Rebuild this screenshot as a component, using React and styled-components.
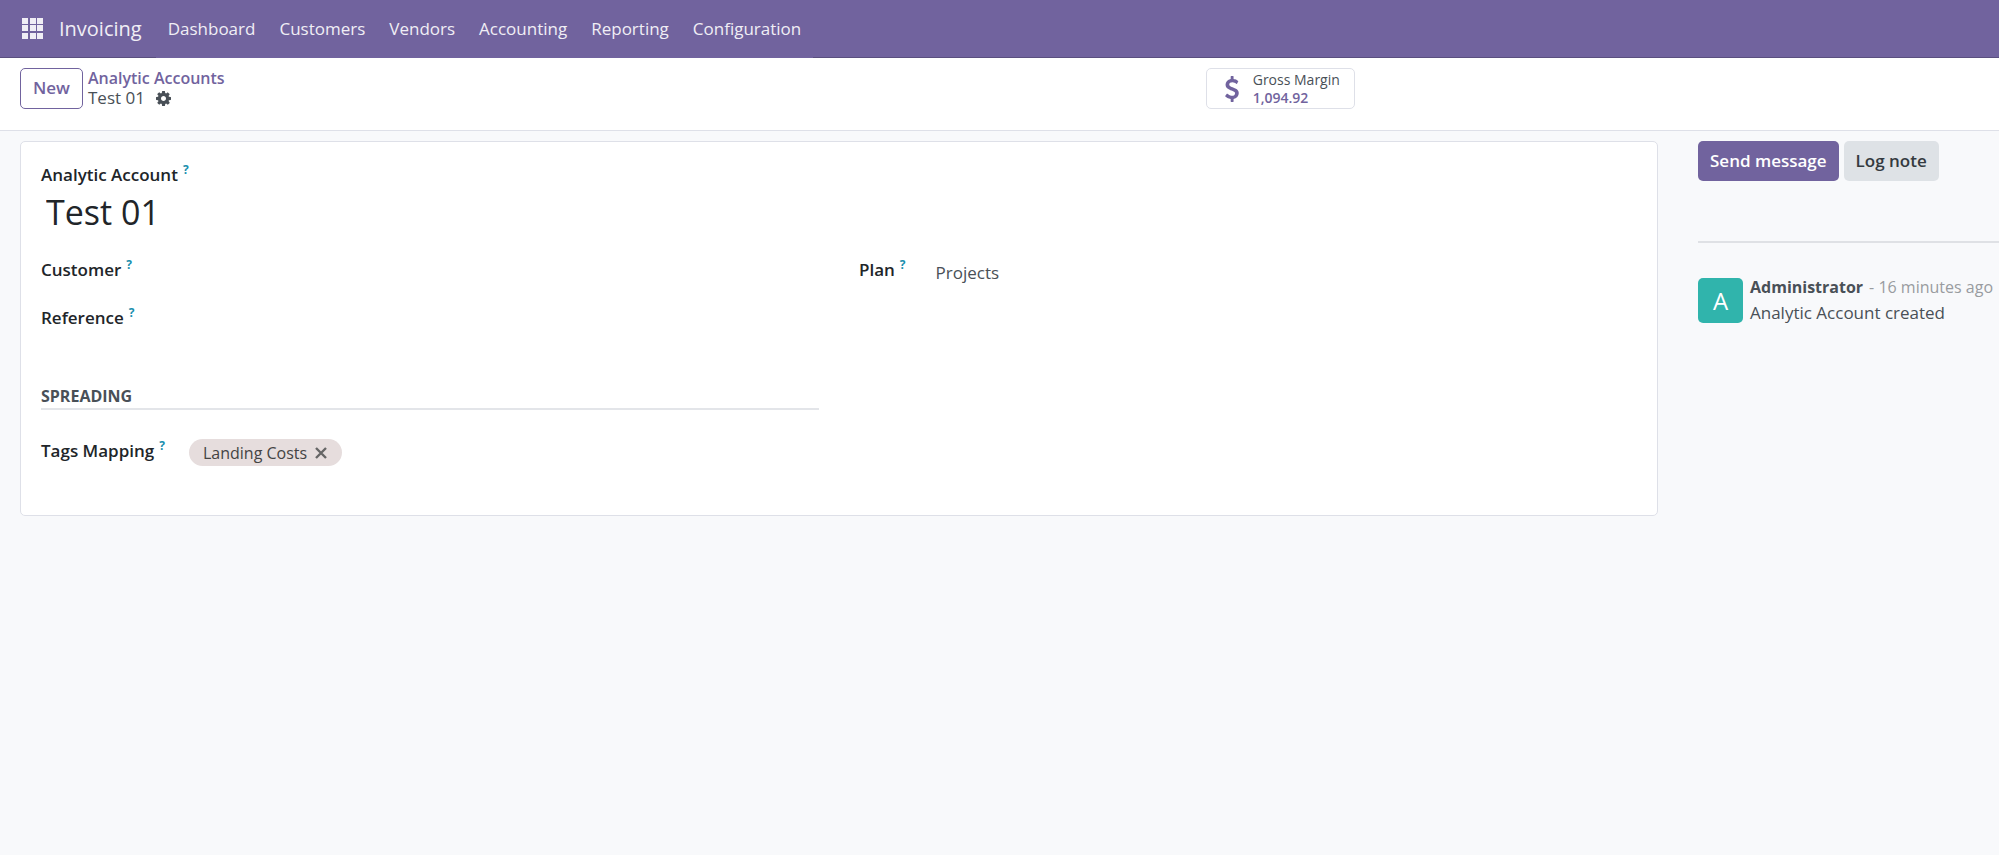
import { useState } from "react"
import styled, { createGlobalStyle } from "styled-components"

const menus = ["Dashboard", "Customers", "Vendors", "Accounting", "Reporting", "Configuration"]

function AppsIcon() {
  const cells = [0, 7, 15]
  return (
    <svg width="22" height="21" viewBox="0 0 22 21" fill="currentColor" aria-hidden="true">
      {cells.map((y) => cells.map((x) => (
        <rect key={`${x}-${y}`} x={x === 7 ? 8 : x} y={y} width="6" height="6" />
      )))}
    </svg>
  )
}

function CogIcon() {
  return (
    <svg width="15" height="15" viewBox="128 128 1536 1536" fill="currentColor" aria-hidden="true">
      <path d="M1152 896q0-106-75-181t-181-75-181 75-75 181 75 181 181 75 181-75 75-181zm512-109v222q0 12-8 23t-20 13l-185 28q-19 54-39 91 35 50 107 138 10 12 10 25t-9 23q-27 37-99 108t-94 71q-12 0-26-9l-138-108q-44 23-91 38-16 136-29 186-7 28-36 28h-222q-14 0-24.500-8.500t-11.500-21.500l-28-184q-49-16-90-37l-141 107q-10 9-25 9-14 0-25-11-126-114-165-168-7-10-7-23 0-12 8-23 15-21 51-66.500t54-70.500q-27-50-41-99l-183-27q-13-2-21-12.500t-8-23.500v-222q0-12 8-23t19-13l186-28q14-46 39-92-40-57-107-138-10-12-10-24 0-10 9-23 26-36 98.500-107.500t94.500-71.500q13 0 26 10l138 107q44-23 91-38 16-136 29-186 7-28 36-28h222q14 0 24.500 8.500t11.500 21.500l28 184q49 16 90 37l142-107q9-9 24-9 13 0 25 10 129 119 165 170 7 8 7 22 0 12-8 23-15 21-51 66.500t-54 70.500q26 50 41 98l183 28q13 2 21 12.500t8 23.500z" />
    </svg>
  )
}

function DollarIcon() {
  return (
    <svg width="26" height="26" viewBox="0 0 1792 1792" fill="currentColor" aria-hidden="true">
      <path d="M1362 1185q0 153-99.500 263.500t-258.500 136.500v175q0 14-9 23t-23 9h-135q-13 0-22.500-9.500t-9.500-22.500v-175q-66-9-127.500-31t-101.500-44.500-74-48-46.500-37.500-17.500-18q-17-21-2-41l103-135q7-10 23-12 15-2 24 9l2 2q113 99 243 125 37 8 74 8 81 0 142.500-43t61.500-122q0-28-15-53t-33.500-42-58.500-37.500-66-32-80-32.500q-39-16-61.500-25t-61.500-26.500-62.500-31-56.500-35.500-53.500-42.500-43.500-49-35.500-58-21-66.500-8.500-78q0-138 98-242t255-134v-180q0-13 9.500-22.500t22.500-9.500h135q14 0 23 9t9 23v176q57 6 110.500 23t87 33.500 63.500 37.500 39 29 15 14q17 18 5 38l-81 146q-8 15-23 16-14 3-27-7-3-3-14.500-12t-39-26.500-58.500-32-74.500-26-85.500-11.500q-95 0-155 43t-60 111q0 26 8.500 48t29.500 41.500 39.500 33 56 31 60.500 27 70 27.500q53 20 81 31.500t76 35 75.500 42.500 62 50 53 63.500 31.500 76.500 13 94z" />
    </svg>
  )
}

function CloseIcon() {
  return (
    <svg width="12" height="12" viewBox="0 0 12 12" stroke="currentColor" strokeWidth="2.4" aria-hidden="true">
      <path d="M1 1L11 11M11 1L1 11" />
    </svg>
  )
}

function FieldLabel({ htmlFor, children }) {
  return (
    <Label htmlFor={htmlFor}>
      {children}
      <Help>?</Help>
    </Label>
  )
}

export default function App() {
  const [name, setName] = useState("Test 01")
  const [customer, setCustomer] = useState("")
  const [reference, setReference] = useState("")
  const [plan, setPlan] = useState("Projects")
  const [tags, setTags] = useState(["Landing Costs"])

  return (
    <>
      <GlobalStyle />
      <Navbar>
        <Brand>
          <AppsButton aria-label="Home menu"><AppsIcon /></AppsButton>
          <BrandLink href="#">Invoicing</BrandLink>
        </Brand>
        <Menu>
          {menus.map((menu) => (
            <MenuItem key={menu}>{menu}</MenuItem>
          ))}
        </Menu>
        <NavRest />
      </Navbar>

      <ControlPanel>
        <PanelLeft>
          <NewButton>New</NewButton>
          <Breadcrumb>
            <a href="#">Analytic Accounts</a>
            <Current>
              <span>Test 01</span>
              <CogButton aria-label="Actions"><CogIcon /></CogButton>
            </Current>
          </Breadcrumb>
        </PanelLeft>
        <StatButton>
          <DollarIcon />
          <StatText>
            <span>Gross Margin</span>
            <strong>1,094.92</strong>
          </StatText>
        </StatButton>
      </ControlPanel>

      <Content>
        <Sheet>
          <FieldLabel htmlFor="name">Analytic Account</FieldLabel>
          <TitleInput id="name" value={name} onChange={(e) => setName(e.target.value)} />

          <Groups>
            <Group>
              <FieldLabel htmlFor="customer">Customer</FieldLabel>
              <FieldInput id="customer" value={customer} onChange={(e) => setCustomer(e.target.value)} />
              <FieldLabel htmlFor="reference">Reference</FieldLabel>
              <FieldInput id="reference" value={reference} onChange={(e) => setReference(e.target.value)} />
            </Group>
            <Group $wide>
              <FieldLabel htmlFor="plan">Plan</FieldLabel>
              <FieldInput id="plan" value={plan} onChange={(e) => setPlan(e.target.value)} />
            </Group>
          </Groups>

          <Groups>
            <div>
              <Separator>SPREADING</Separator>
              <Group>
                <FieldLabel htmlFor="tags">Tags Mapping</FieldLabel>
                <TagField>
                  {tags.map((tag) => (
                    <Tag key={tag}>
                      {tag}
                      <TagRemove
                        aria-label={`Remove ${tag}`}
                        onClick={() => setTags(tags.filter((t) => t !== tag))}
                      >
                        <CloseIcon />
                      </TagRemove>
                    </Tag>
                  ))}
                  <FieldInput id="tags" />
                </TagField>
              </Group>
            </div>
          </Groups>
        </Sheet>

        <Chatter>
          <ChatterTop>
            <ChatterButton $primary>Send message</ChatterButton>
            <ChatterButton>Log note</ChatterButton>
          </ChatterTop>
          <Message>
            <Avatar>A</Avatar>
            <div>
              <MessageHead>
                <strong>Administrator</strong>
                <small>- 16 minutes ago</small>
              </MessageHead>
              <MessageBody>Analytic Account created</MessageBody>
            </div>
          </Message>
        </Chatter>
      </Content>
    </>
  )
}

const GlobalStyle = createGlobalStyle`
  * {
    box-sizing: border-box;
  }

  body {
    margin: 0;
    background-color: #f8f9fb;
    color: #495057;
    font-family: "Open Sans", "Noto Sans", sans-serif;
    font-size: 17px;
    line-height: 24px;
  }

  button, input {
    margin: 0;
    padding: 0;
    border: 0;
    background: none;
    color: inherit;
    font: inherit;
  }

  button {
    cursor: pointer;
  }

  a {
    color: #71639e;
    text-decoration: none;
  }
`;

const Navbar = styled.nav`
  display: flex;
  height: 58px;
  background-color: #71639e;
  color: #f0eef5;
`;

const Brand = styled.div`
  display: flex;
  align-items: center;
  padding: 0 14px 0 22px;
  gap: 15px;
  border-bottom: 1px solid #5a4f7f;
`;

const AppsButton = styled.button`
  display: flex;
`;

const BrandLink = styled.a`
  color: inherit;
  font-size: 20px;
`;

const Menu = styled.div`
  display: flex;
`;

const MenuItem = styled.button`
  padding: 0 12px;
`;

const NavRest = styled.div`
  flex: 1;
  border-bottom: 1px solid #5a4f7f;
`;

const ControlPanel = styled.header`
  display: grid;
  grid-template-columns: 23fr 15fr;
  align-items: start;
  min-height: 73px;
  padding: 10px 20px;
  background-color: #fff;
  border-bottom: 1px solid #dee0e8;
`;

const PanelLeft = styled.div`
  display: flex;
  gap: 5px;
`;

const NewButton = styled.button`
  height: 41px;
  padding: 0 12px 2px;
  border: 1px solid #71639e;
  border-radius: 5px;
  color: #71639e;
  font-weight: 600;
`;

const Breadcrumb = styled.div`
  line-height: 20px;

  a {
    font-size: 16px;
    font-weight: 600;
  }
`;

const Current = styled.div`
  display: flex;
  align-items: center;
  gap: 11px;
`;

const CogButton = styled.button`
  display: flex;
`;

const StatButton = styled.button`
  display: flex;
  align-items: center;
  justify-self: start;
  height: 41px;
  padding: 0 14px 0 12px;
  gap: 8px;
  border: 1px solid #dee0e8;
  border-radius: 5px;
  color: #71639e;
`;

const StatText = styled.span`
  display: flex;
  flex-direction: column;
  font-size: 14px;
  line-height: 18px;
  text-align: left;

  span {
    color: #495057;
  }

  strong {
    font-weight: 600;
  }
`;

const Content = styled.main`
  display: flex;
  align-items: flex-start;
  padding: 10px 0 0 20px;
  gap: 40px;
`;

const Sheet = styled.section`
  flex: 1;
  padding: 21px 20px 48px;
  background-color: #fff;
  border: 1px solid #dee0e8;
  border-radius: 5px;
`;

const Label = styled.label`
  color: #212529;
  font-weight: 600;
  white-space: nowrap;
`;

const Help = styled.sup`
  padding-left: 5px;
  color: #1a8fae;
  font-size: 12px;
  font-weight: 700;
  line-height: 0;
`;

const TitleInput = styled.input`
  display: block;
  width: 100%;
  height: 49px;
  padding: 0 5px;
  color: #212529;
  font-size: 34px;
`;

const Groups = styled.div`
  display: grid;
  grid-template-columns: 1fr 1fr;
  column-gap: 40px;
  padding-top: 22px;
`;

const Group = styled.div`
  display: grid;
  grid-template-columns: max-content 1fr;
  grid-auto-rows: 28px;
  align-content: start;
  column-gap: ${({ $wide }) => ($wide ? "30px" : "24px")};
  row-gap: 20px;
`;

const FieldInput = styled.input`
  min-width: 0;
  height: 28px;
`;

const Separator = styled.h2`
  margin: 29px 0;
  border-bottom: 2px solid #e3e5e9;
  font-size: 16px;
  font-weight: 700;
  line-height: 23px;
`;

const TagField = styled.div`
  display: flex;
`;

const Tag = styled.span`
  display: flex;
  align-items: center;
  height: 27px;
  padding: 0 15px 0 14px;
  gap: 8px;
  border-radius: 14px;
  background-color: #e6dddd;
  color: #444;
  font-size: 16px;
  font-weight: 500;
  white-space: nowrap;
`;

const TagRemove = styled.button`
  display: flex;
  color: #666;
`;

const Chatter = styled.aside`
  flex: 0 0 301px;
`;

const ChatterTop = styled.div`
  display: flex;
  align-items: flex-start;
  height: 102px;
  gap: 5px;
  border-bottom: 2px solid #dfe1e5;
`;

const ChatterButton = styled.button`
  height: 40px;
  padding: 0 12px;
  border-radius: 5px;
  background-color: ${({ $primary }) => ($primary ? "#71639e" : "#dee2e6")};
  color: ${({ $primary }) => ($primary ? "#fff" : "#343a40")};
  font-weight: 600;
`;

const Message = styled.article`
  display: flex;
  padding-top: 32px;
  gap: 7px;
`;

const Avatar = styled.div`
  flex: none;
  width: 45px;
  height: 45px;
  margin-top: 3px;
  border-radius: 5px;
  background-color: #30b4ac;
  color: #fff;
  font-size: 24px;
  line-height: 45px;
  text-align: center;
`;

const MessageHead = styled.div`
  display: flex;
  gap: 6px;
  font-size: 16px;
  white-space: nowrap;

  small {
    color: #999ca0;
    font-size: 16px;
  }
`;

const MessageBody = styled.p`
  margin: 2px 0 0;
`;
